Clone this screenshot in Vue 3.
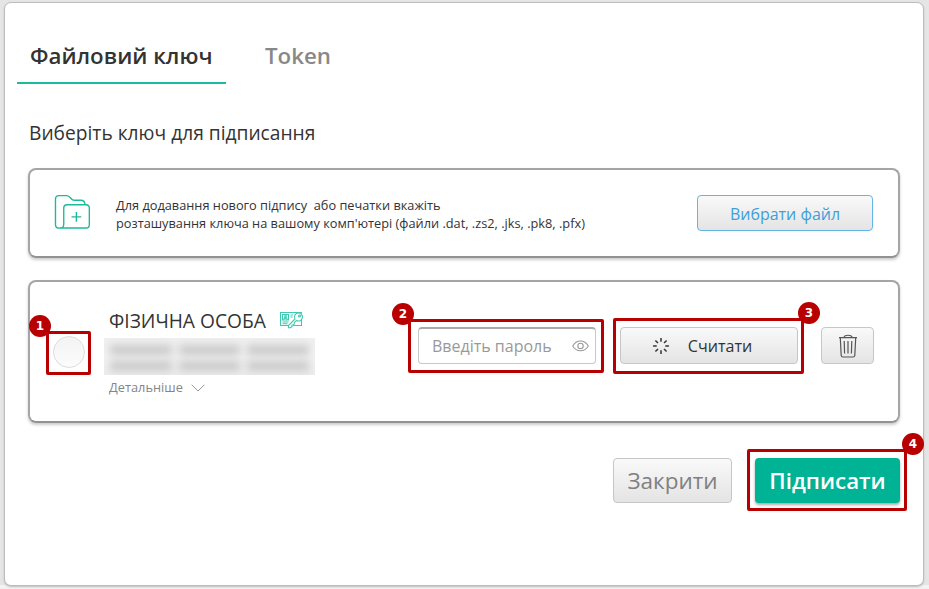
<script setup>
const tabs = [
  { label: 'Файловий ключ', active: true },
  { label: 'Token', active: false },
]
const spokes = [0, 45, 90, 135, 180, 225, 270, 315]
</script>

<template>
  <main class="panel">
    <nav class="tabs">
      <a v-for="tab in tabs" :key="tab.label" class="tab" :class="{ active: tab.active }"><span>{{ tab.label }}</span></a>
    </nav>
    <h1 class="heading"><span>Виберіть ключ для підписання</span></h1>

    <section class="card add-card">
      <svg class="folder" width="37" height="36" viewBox="0 0 38 37" fill="none" stroke="#1cb99c" stroke-width="1.4">
        <path d="M6 35H4.5A3.5 3.5 0 0 1 1.5 31.500V5A3.500 3.500 0 0 1 5 1.700H13C15.500 1.700 16.200 3 17.500 4.600C18.600 6 19 6.400 21 6.400H27.500C30.500 6.400 31.800 8 31.800 10.700" />
        <path d="M6 35C8.500 35 10 33.500 10 31V14.500A3.500 3.500 0 0 1 13.500 11H33A3.500 3.500 0 0 1 36.300 14.500V31.500A3.500 3.500 0 0 1 33 35H6" />
        <path d="M18 23.500H28M23 18.500V28.500" />
      </svg>
      <p class="hint"><span class="hint-a">Для додавання нового підпису&nbsp; або печатки вкажіть</span><br><span class="hint-b">розташування ключа на вашому комп'ютері (файли .dat, .zs2, .jks, .pk8, .pfx)</span></p>
      <button class="btn choose"><span>Вибрати файл</span></button>
    </section>

    <section class="card key-card">
      <div class="anchor radio-wrap">
        <span class="radio"></span>
        <i class="mark mark-1"></i><b class="badge badge-1">1</b>
      </div>
      <div class="owner">
        <div class="owner-title">
          <span class="owner-name">ФІЗИЧНА ОСОБА</span>
          <svg class="cert" width="24" height="18" viewBox="0 0 24 18" fill="none" stroke="#42c8b0" stroke-width="1.1">
            <path d="M9 14.500H.5V1.500H21.500V2.500M21.500 9V14.500H13" />
            <path d="M2.500 3.500H8.500V9H2.500ZM3.700 9C3.700 6.500 7.300 6.500 7.300 9M4.800 4.800H6.200V6.300H4.800ZM2.500 11H8.500M2.500 12.700H7.500M10.500 4H13M10.500 6H12.500" />
            <path d="M15 8L8.500 14.500V16.700H10.700L12 15.400V14H13.400L14.200 13V11.700L16.500 9.500A4 4 0 1 0 15 8Z" fill="#fff" />
            <circle cx="19.500" cy="5" r="1" />
          </svg>
        </div>
        <div class="redacted">
          <div v-for="row in 2" :key="row" class="smudge"><i></i><i></i><i></i></div>
        </div>
        <div class="details">
          <span>Детальніше</span>
          <svg width="14" height="8" viewBox="0 0 14 8" fill="none" stroke="#999" stroke-width="1"><path d="M.7 .8L7 7L13.300 .8" /></svg>
        </div>
      </div>
      <div class="anchor password-wrap">
        <div class="password">
          <span>Введіть пароль</span>
          <svg width="17" height="12" viewBox="0 0 17 12" fill="none" stroke="#999" stroke-width="1.1">
            <path d="M.7 6C4.500 -.7 12.500 -.7 16.300 6C12.500 12.400 4.500 12.400 .7 6Z" /><circle cx="8.500" cy="6" r="2.700" />
          </svg>
        </div>
        <i class="mark mark-2"></i><b class="badge badge-2">2</b>
      </div>
      <div class="anchor read-wrap">
        <button class="btn read">
          <svg width="18" height="18" viewBox="-9 -9 18 18" stroke="#333" stroke-width="1.5">
            <path v-for="a in spokes" :key="a" d="M0 -4.300V-7.900" :transform="`rotate(${a})`" />
          </svg>
          <span>Считати</span>
        </button>
        <i class="mark mark-3"></i><b class="badge badge-3">3</b>
      </div>
      <button class="btn trash">
        <svg width="20" height="24" viewBox="0 0 20 24" fill="none" stroke="#555" stroke-width="1.2">
          <path d="M1 3.700H19M6 3.500C6 .5 14 .5 14 3.500M2.300 4L3.200 21.500Q3.300 23 5 23H15Q16.700 23 16.800 21.500L17.700 4M6.200 7L6.600 19.500M10 7V19.500M13.800 7L13.400 19.500" />
        </svg>
      </button>
    </section>

    <footer class="actions">
      <button class="btn close"><span>Закрити</span></button>
      <div class="anchor sign-wrap">
        <button class="sign"><span>Підписати</span></button>
        <i class="mark mark-4"></i><b class="badge badge-4">4</b>
      </div>
    </footer>
  </main>
</template>

<style>
body { background: #e5e5e5; overflow: hidden; }
#app { height: 589px; background: linear-gradient(#e5e5e5 585px, #f3f3f3 585px); }
</style>

<style scoped>
* { box-sizing: border-box; }
.panel {
  width: 920px; height: 584px; margin: 0 0 0 4px; border: 1px solid #bdbdbd; border-radius: 7px;
  background: #fff; transform: translateY(2px); box-shadow: 0 1px 2px #bbb;
  font-family: "Open Sans", sans-serif; color: #333; white-space: nowrap;
}
button { font-family: inherit; padding: 0; margin: 0; }
.tabs { display: flex; height: 81px; padding-left: 12px; }
.tab { display: flex; align-items: center; width: 209px; height: 81px; padding: 25px 0 0 13px; font-size: 22.3px; font-weight: 600; color: #888; }
.tab:last-child { padding: 23px 0 0 39px; }
.tab.active { color: #333; border-bottom: 2px solid #1dbb9d; }
.heading { margin: 34px 0 0 24px; height: 29px; line-height: 29px; font-size: 19.2px; font-weight: 400; }
.card { display: flex; width: 872px; margin-left: 23px; border: 2px solid #a5a5a5; border-bottom-color: #929292; border-radius: 8px; box-shadow: 0 2px 3px #ccc; }
.add-card { height: 90px; margin-top: 21px; padding: 24px 25px 0 24px; }
.folder { flex: none; }
.hint { flex: 1; margin: 2px 0 0 25px; font-size: 12.78px; line-height: 18px; }
.btn { display: flex; align-items: center; justify-content: center; flex: none; border: 1px solid #c6c6c6; border-radius: 4px; background: linear-gradient(#f9f9f9, #e4e4e4); color: #333; }
.choose { width: 176px; height: 36px; margin-top: 1px; padding-top: 1px; border-color: #63b5e6; color: #3d9fdb; font-size: 16px; }
.key-card { height: 143px; margin-top: 22px; }
.anchor { position: relative; flex: none; }
.radio-wrap { width: 32px; height: 32px; margin: 54px 0 0 23px; }
.radio { display: block; width: 32px; height: 32px; border: 1px solid #ddd; border-radius: 50%; background: linear-gradient(#f3f3f3, #fcfcfc); }
.owner { width: 211px; margin: 26px 0 0 19px; }
.owner-title { display: flex; height: 30px; align-items: center; padding: 0 0 5px 5px; font-size: 19.2px; }
.cert { margin: -2px 0 0 14px; }
.redacted { width: 211px; height: 37px; padding: 7px 6px; overflow: hidden; background: linear-gradient(#f0f0f0, #f3f3f3 50%, #ededed); }
.smudge { display: flex; gap: 7px; height: 10px; margin-bottom: 6px; filter: blur(4px); }
.smudge i { width: 62px; background: #c8c8c8; }
.details { display: flex; align-items: center; gap: 8px; height: 24px; padding-left: 5px; font-size: 12.8px; color: #858585; }
.details svg { margin-top: 2px; }
.password-wrap { margin: 45px 0 0 103px; }
.password { display: flex; align-items: center; justify-content: space-between; width: 178px; height: 37px; padding: 0 6px 0 13px; border: 1px solid #c8c8c8; border-top: 2px solid #aaa; border-radius: 4px; font-size: 16px; color: #999; }
.read-wrap { margin: 45px 0 0 24px; }
.read { width: 178px; height: 37px; gap: 18px; font-size: 16.1px; padding-right: 14px; }
.trash { width: 53px; height: 37px; margin: 45px 0 0 23px; }
.actions { display: flex; gap: 23px; margin: 35px 0 0 608px; }
.close { width: 119px; height: 45px; font-size: 22.5px; color: #808080; }
.sign { display: flex; align-items: center; justify-content: center; width: 145px; height: 45px; border: 0; border-radius: 4px; background: #00b395; color: #fff; font-size: 22.3px; font-weight: 600; box-shadow: 0 2px 3px #aaa; }
.mark { position: absolute; border: 3px solid #b80000; border-radius: 2px; }
.badge { position: absolute; width: 22px; height: 22px; border-radius: 50%; background: #b80000; color: #fff; font: bold 12px/22px "DejaVu Sans", sans-serif; text-align: center; }
.mark-1 { left: -7px; top: -5px; width: 45px; height: 44px; }
.badge-1 { left: -24px; top: -21px; }
.mark-2 { left: -10px; top: -8px; width: 196px; height: 54px; }
.badge-2 { left: -26px; top: -24px; }
.mark-3 { left: -7px; top: -9px; width: 191px; height: 56px; }
.badge-3 { left: 178px; top: -25px; }
.mark-4 { left: -8px; top: -9px; width: 160px; height: 62px; }
.badge-4 { left: 147px; top: -25px; }
</style>
